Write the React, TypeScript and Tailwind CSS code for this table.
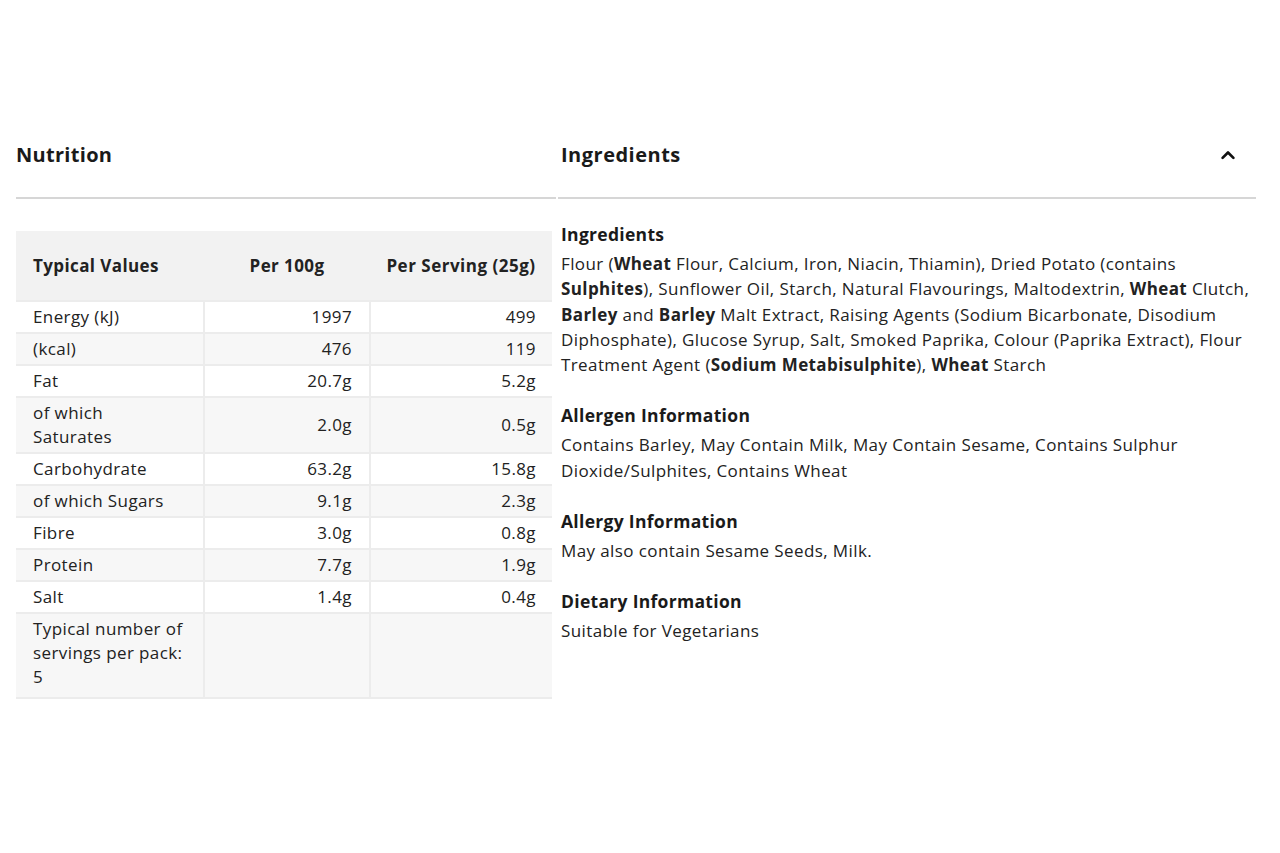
import React from 'react';

const rows: { label: string; per100: string; perServing: string }[] = [
  { label: 'Energy (kJ)', per100: '1997', perServing: '499' },
  { label: '(kcal)', per100: '476', perServing: '119' },
  { label: 'Fat', per100: '20.7g', perServing: '5.2g' },
  { label: 'of which Saturates', per100: '2.0g', perServing: '0.5g' },
  { label: 'Carbohydrate', per100: '63.2g', perServing: '15.8g' },
  { label: 'of which Sugars', per100: '9.1g', perServing: '2.3g' },
  { label: 'Fibre', per100: '3.0g', perServing: '0.8g' },
  { label: 'Protein', per100: '7.7g', perServing: '1.9g' },
  { label: 'Salt', per100: '1.4g', perServing: '0.4g' },
];

const ChevronUp = () => (
  <svg width="20" height="20" viewBox="0 0 24 24" fill="none" stroke="#111" strokeWidth="3.2" strokeLinecap="round" strokeLinejoin="round">
    <path d="M5.5 15.5l6.5-6.5 6.5 6.5" />
  </svg>
);

const Section: React.FC<{ title: string; children: React.ReactNode }> = ({ title, children }) => (
  <div className="mb-[26px]">
    <h3 className="text-[17.5px] font-bold leading-[25px] mb-[4px] tracking-[0.3px]">{title}</h3>
    <p className="text-[17px] leading-[25.3px] text-[#222] tracking-[0.4px]">{children}</p>
  </div>
);

export default function App() {
  return (
    <div className="min-h-[853px] bg-white text-[#1a1a1a] pt-[142px] pl-4 pr-6" style={{ fontFamily: '"Open Sans", Lato, sans-serif' }}>
      <div className="flex gap-[2px]">
        {/* Nutrition */}
        <div className="w-[540px] shrink-0">
          <div className="border-b-2 border-[#d6d6d6] pb-[29px]">
            <h2 className="text-[20px] font-bold leading-[26px] tracking-[0.3px]">Nutrition</h2>
          </div>
          <table className="mt-[32px] w-[536px] border-collapse text-[17px] text-[#222] tracking-[0.4px]">
            <thead>
              <tr className="bg-[#f2f2f2] h-[70px]">
                <th className="w-[188px] text-left font-bold pl-[17px] tracking-[0.4px]">Typical Values</th>
                <th className="w-[166px] text-center font-bold tracking-[0.4px]">Per 100g</th>
                <th className="text-center font-bold tracking-[0.5px]">Per Serving (25g)</th>
              </tr>
            </thead>
            <tbody>
              {rows.map((r, i) => (
                <tr key={r.label} className={(i % 2 === 1 ? 'bg-[#f7f7f7] ' : 'bg-white ') + 'border-t-2 border-[#ececec]'}>
                  <td className="pl-[17px] pr-2 leading-[24px] py-[3px] border-r-2 border-[#ececec]">
                    {r.label === 'of which Saturates' ? (
                      <>of which<br />Saturates</>
                    ) : (
                      r.label
                    )}
                  </td>
                  <td className="text-right pr-[17px] border-r-2 border-[#ececec]">{r.per100}</td>
                  <td className="text-right pr-[16px]">{r.perServing}</td>
                </tr>
              ))}
              <tr className="bg-[#f7f7f7] border-t-2 border-b-2 border-[#ececec]">
                <td className="pl-[17px] pr-2 pt-[3px] pb-[8px] leading-[24px] border-r-2 border-[#ececec] align-top">
                  Typical number of<br />servings per pack:<br />5
                </td>
                <td className="border-r-2 border-[#ececec]"></td>
                <td></td>
              </tr>
            </tbody>
          </table>
        </div>

        {/* Ingredients */}
        <div className="flex-1">
          <div className="border-b-2 border-[#d6d6d6] pb-[29px] pl-[3px] pr-[18px] flex items-center justify-between">
            <h2 className="text-[20px] font-bold leading-[26px] tracking-[0.5px]">Ingredients</h2>
            <ChevronUp />
          </div>
          <div className="pl-[3px] pt-[23px]">
            <Section title="Ingredients">
              Flour (<b>Wheat</b> Flour, Calcium, Iron, Niacin, Thiamin), Dried Potato (contains <b>Sulphites</b>), Sunflower Oil, Starch, Natural Flavourings, Maltodextrin, <b>Wheat</b> Clutch, <b>Barley</b> and <b>Barley</b> Malt Extract, Raising Agents (Sodium Bicarbonate, Disodium Diphosphate), Glucose Syrup, Salt, Smoked Paprika, Colour (Paprika Extract), Flour Treatment Agent (<b>Sodium Metabisulphite</b>), <b>Wheat</b> Starch
            </Section>
            <Section title="Allergen Information">
              Contains Barley, May Contain Milk, May Contain Sesame, Contains Sulphur Dioxide/Sulphites, Contains Wheat
            </Section>
            <Section title="Allergy Information">May also contain Sesame Seeds, Milk.</Section>
            <Section title="Dietary Information">Suitable for Vegetarians</Section>
          </div>
        </div>
      </div>
    </div>
  );
}
